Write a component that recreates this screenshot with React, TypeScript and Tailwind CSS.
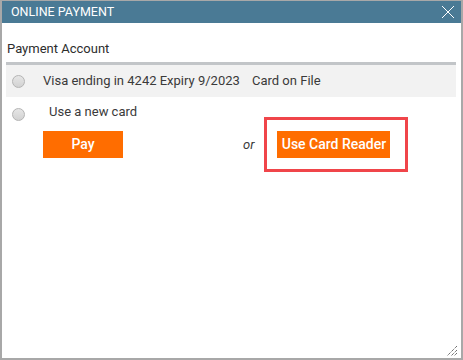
function Radio() {
  return (
    <span className="block w-[13px] h-[13px] rounded-full border border-[#b4b4b4] bg-gradient-to-b from-[#e6e6e6] to-[#d2d2d2]" />
  );
}

export default function App() {
  return (
    <div className="w-[463px] h-[360px] bg-white border-t border-l-2 border-r-2 border-b-2 border-[#a8a8a8] flex flex-col relative font-['Roboto','Liberation_Sans',sans-serif]">
      <div className="h-[22px] bg-[#4a7a95] flex items-center justify-between pl-[9px] pr-[6px] shrink-0">
        <span className="text-white text-[12.5px] leading-none">ONLINE PAYMENT</span>
        <svg width="14" height="14" viewBox="0 0 14 14" className="mt-[-1px]">
          <path d="M1 1 L13 13 M13 1 L1 13" stroke="#fff" strokeWidth="1" />
        </svg>
      </div>

      <div className="pt-[19px] pl-[5px] text-[13px] leading-[14px] text-[#2d2d2d]">Payment Account</div>

      <div className="ml-[4px] w-[450px] mt-[6px] border-t-[3px] border-[#c2c5c8]">
        <div className="h-[32px] bg-[#f2f2f2] flex items-center text-[13px] text-[#3a3a3a]">
          <div className="w-[37px] pl-[6px] pt-[1px]">
            <Radio />
          </div>
          <span className="w-[209px]">Visa ending in 4242 Expiry 9/2023</span>
          <span>Card on File</span>
        </div>
        <div className="h-[32px] flex items-center text-[13px] text-[#3a3a3a]">
          <div className="w-[43px] pl-[6px] pt-[3px]">
            <Radio />
          </div>
          <span className="-mt-[3px]">Use a new card</span>
        </div>
      </div>

      <div className="flex items-center mt-[2px] pl-[41px]">
        <button className="w-[80px] h-[27px] bg-[#ff6d00] text-white text-[14px] font-medium">Pay</button>
        <span className="ml-[120px] text-[13px] italic text-[#3a3a3a]">or</span>
        <div className="relative ml-[23px]">
          <div className="absolute left-[-13px] top-[-14px] w-[144px] h-[55px] border-[3px] border-[#f0454a]" />
          <button className="w-[113px] h-[27px] bg-[#ff6d00] text-white text-[14px] font-medium">Use Card Reader</button>
        </div>
      </div>

      <svg width="12" height="12" viewBox="0 0 12 12" className="absolute right-[3px] bottom-[1px]">
        <path d="M11 1 L1 11 M11 5 L5 11 M11 8 L8 11" stroke="#333" strokeWidth="1" strokeDasharray="1 1" />
      </svg>
    </div>
  );
}
